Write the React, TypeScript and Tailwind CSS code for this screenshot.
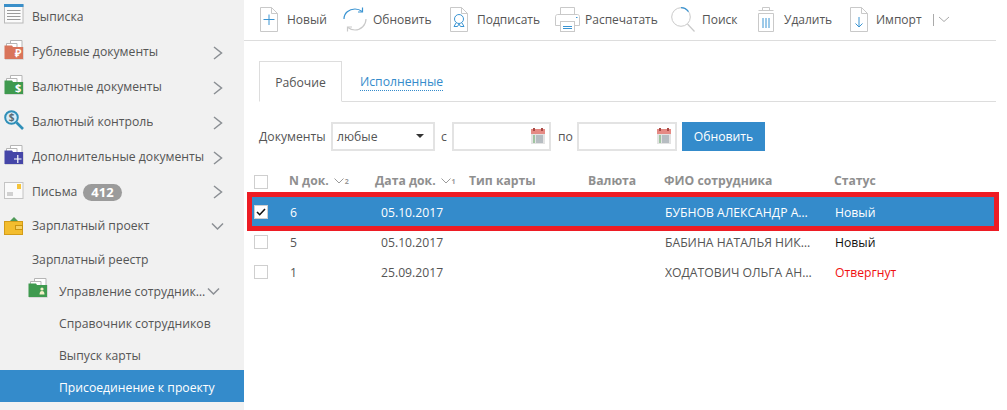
import React from "react";

const Chevron = ({ down }: { down?: boolean }) => (
  <svg width="20" height="14" viewBox="0 0 20 14" fill="none" stroke="#8b8f94" strokeWidth="1.5">
    {down ? <path d="M5 3.5l5.5 5.5 5.5-5.5" /> : <path d="M7 1l7.5 6-7.5 6" />}
  </svg>
);

const Folder = ({ color, children }: { color: string; children?: React.ReactNode }) => (
  <svg width="20" height="20" viewBox="0 0 20 20">
    <path d="M6.5 .5h11.5v7h-11.5z" fill="#fff" stroke="#b5b5b5" />
    <path d="M2.5 3.5h10.5v5h-10.5z" fill="#fff" stroke="#b5b5b5" />
    <path d="M.5 5.5h7.5l1 1.5h10V19H.5z" fill={color} />
    <path d="M1 19.5h18.5V7" stroke="#d8d8d8" fill="none" />
    {children}
  </svg>
);

const Vypiska = () => (
  <svg width="20" height="20" viewBox="0 0 20 20" fill="none">
    <rect x=".5" y="1" width="18.5" height="18" fill="#fbfbfb" stroke="#b9b9b9" />
    <rect x="0" y="0" width="19.5" height="3" fill="#3a8fc9" />
    <path d="M3 6.5h13.5M3 9.5h13.5M3 12.5h13.5M3 15.5h13.5" stroke="#9a9a9a" />
  </svg>
);

const MoneySearch = () => (
  <svg width="20" height="20" viewBox="0 0 20 20" fill="none">
    <circle cx="7.5" cy="7.5" r="6.3" fill="#d9ecf6" stroke="#2f8fb8" strokeWidth="2" />
    <path d="M12.5 12.5l6.5 6.5" stroke="#2f8fb8" strokeWidth="2.6" />
    <text x="7.5" y="11" textAnchor="middle" fontSize="10" fontWeight="700" fill="#5a6a72" fontFamily="Open Sans">$</text>
  </svg>
);

const Letter = () => (
  <svg width="20" height="18" viewBox="0 0 20 18" fill="none">
    <rect x=".5" y=".5" width="18.5" height="16" fill="#fafafa" stroke="#c4c4c4" />
    <rect x="13" y="2" width="4" height="5" fill="#f5c43a" />
    <path d="M3 11h6M3 13h6" stroke="#a8a8a8" />
  </svg>
);

const Wallet = () => (
  <svg width="20" height="20" viewBox="0 0 20 20" fill="none">
    <path d="M5 6l5-5 5 5z" fill="#4f9a58" />
    <rect x=".5" y="5.5" width="18" height="13" fill="#f3bd2e" stroke="#d39c18" />
    <rect x="11.5" y="9.5" width="7" height="4" fill="#f7d061" stroke="#c9930f" />
  </svg>
);

const iconStroke = "#c9c9c9";
const iconBlue = "#3a94d2";

const DocIcon = ({ children }: { children?: React.ReactNode }) => (
  <svg width="18" height="25" viewBox="0 0 18 25" fill="none">
    <path d="M.5.5h11l6 6v18H.5z" fill="#fff" stroke={iconStroke} />
    <path d="M11.5.5v6h6" stroke={iconStroke} />
    {children}
  </svg>
);

const Refresh = () => (
  <svg width="24" height="25" viewBox="0 0 24 25" fill="none">
    <path d="M1 12C1 6 6 2 12 2c3 0 5 .8 7 2.5" stroke={iconBlue} strokeWidth="1.2" />
    <path d="M19.5 .5v4.5h-4.5" stroke={iconBlue} strokeWidth="1.2" />
    <path d="M23 12c0 6-5 11-11 11-3 0-5-.8-7-2.5" stroke={iconStroke} strokeWidth="1.2" />
    <path d="M4.5 24.5v-4.5h4.5" stroke={iconStroke} strokeWidth="1.2" />
  </svg>
);

const Printer = () => (
  <svg width="25" height="25" viewBox="0 0 25 25" fill="none" stroke={iconStroke}>
    <path d="M5.5 7.5v-7h14v7" fill="#fff" />
    <path d="M5.5 18.5h-5v-9c0-1 1-2 2-2h20c1 0 2 1 2 2v9h-5" fill="#fff" />
    <rect x="5.5" y="14.5" width="14" height="10" fill="#fff" />
    <path d="M8 19.5h9M8 21.5h9" stroke={iconBlue} />
    <path d="M21 10.5h1.5" stroke={iconBlue} />
  </svg>
);

const SearchIcon = () => (
  <svg width="24" height="25" viewBox="0 0 24 25" fill="none">
    <circle cx="10" cy="10" r="9.3" stroke={iconStroke} fill="#fff" />
    <path d="M10 .7a9.3 9.3 0 0 1 7.5 4" stroke={iconBlue} strokeWidth="1.2" />
    <path d="M16.5 17l7 7.5" stroke={iconStroke} strokeWidth="1.2" />
  </svg>
);

const Trash = () => (
  <svg width="16" height="25" viewBox="0 0 16 25" fill="none" stroke={iconStroke}>
    <path d="M4.5 3V.5h7V3" />
    <path d="M.5 3.5h15" />
    <path d="M.5 6.5h15" />
    <path d="M.5 6.5v18h15v-18" />
    <path d="M5 11v10M8 11v10M11 11v10" stroke={iconBlue} />
  </svg>
);

const Tool = ({ icon, label, className, labelCls }: { icon: React.ReactNode; label: string; className: string; labelCls: string }) => (
  <div className={`flex items-center ${className}`}>
    {icon}
    <span className={`whitespace-nowrap text-[12px] leading-none text-[#555555] ${labelCls}`}>{label}</span>
  </div>
);

const Calendar = () => (
  <svg width="14" height="16" viewBox="0 0 14 16" className="absolute right-[4px] top-[4px]">
    <rect x="0" y="1" width="14" height="15" fill="#e3e3e3" />
    <rect x="0" y="1" width="14" height="5" fill="#e58a84" />
    <rect x="2" y="0" width="2" height="3" fill="#a84a45" />
    <rect x="10" y="0" width="2" height="3" fill="#a84a45" />
    <path d="M2 8h2M2 10h2M2 12h2M2 14h2" stroke="#5da560" strokeWidth="1" />
    <path d="M5 8h7M5 10h7M5 12h7M5 14h7" stroke="#8a96a0" strokeWidth="1" />
  </svg>
);

const SortArrow = ({ n }: { n: string }) => (
  <span className="ml-[5px] flex items-center">
    <svg width="10" height="6" viewBox="0 0 10 6" fill="none" stroke="#9a9a9a">
      <path d="M.5.5L5 5 9.5.5" />
    </svg>
    <span className="ml-px text-[7px] leading-none text-[#999999]">{n}</span>
  </span>
);

const Box = ({ checked }: { checked?: boolean }) => (
  <div className="flex h-[14px] w-[14px] items-center justify-center border border-[#cfcfcf] bg-white">
    {checked && (
      <svg width="10" height="8" viewBox="0 0 10 8" fill="none" stroke="#111" strokeWidth="1.6">
        <path d="M1 4l2.7 2.7L9 1" />
      </svg>
    )}
  </div>
);

const SideRow = ({ icon, label, badge, arrow, h, lift }: { icon: React.ReactNode; label: string; badge?: string; arrow?: "r" | "d"; h: string; lift: string }) => (
  <div className={`flex items-center pl-[4px] ${h}`}>
    <div className={`flex w-[28px] shrink-0 ${lift}`}>{icon}</div>
    <span className="truncate text-[12.2px] text-[#555555]">{label}</span>
    {badge && (
      <span className="ml-[6px] rounded-full bg-[#9b9b9b] px-[8px] text-[13px] font-bold leading-[17px] text-white">{badge}</span>
    )}
    {arrow && (
      <span className="ml-auto mr-[17px]">
        <Chevron down={arrow === "d"} />
      </span>
    )}
  </div>
);

const Row = ({ n, date, fio, status, statusCls, checked, active }: { n: string; date: string; fio: string; status: string; statusCls: string; checked?: boolean; active?: boolean }) => (
  <div className={`flex h-[30px] items-center text-[12.2px] ${active ? "bg-[#348bcb] text-white" : "text-[#555555]"}`}>
    <div className="w-[38px] pl-[2px]"><Box checked={checked} /></div>
    <div className="w-[91px] pt-[2px]">{n}</div>
    <div className="w-[284px] pt-[2px]">{date}</div>
    <div className="mr-[20px] w-[150px] truncate pt-[2px]">{fio}</div>
    <div className={`pt-[2px] ${statusCls}`}>{status}</div>
  </div>
);

export default function App() {
  return (
    <div className="relative flex h-[410px] w-[1007px] overflow-hidden bg-white" style={{ fontFamily: '"Open Sans", sans-serif' }}>
      <aside className="w-[244px] shrink-0 bg-[#f1f1f1]">
        <SideRow h="h-[35px] pb-[1px]" lift="-translate-y-[3px]" icon={<Vypiska />} label="Выписка" />
        <SideRow h="h-[35px]" lift="-translate-y-[3px]" icon={<Folder color="#d9745a"><text x="11" y="17" fontSize="11" fill="#fff" fontFamily="Open Sans" fontWeight="700">₽</text></Folder>} label="Рублевые документы" arrow="r" />
        <SideRow h="h-[35px]" lift="-translate-y-[3px]" icon={<Folder color="#3f9a4f"><text x="11" y="17" fontSize="11" fill="#fff" fontFamily="Open Sans" fontWeight="700">$</text></Folder>} label="Валютные документы" arrow="r" />
        <SideRow h="h-[35px]" lift="-translate-y-[3px]" icon={<MoneySearch />} label="Валютный контроль" arrow="r" />
        <SideRow h="h-[35px]" lift="-translate-y-[3px]" icon={<Folder color="#4546a8"><path d="M10 14h7.5M13.8 10v8" stroke="#fff" strokeWidth="1.2" /></Folder>} label="Дополнительные документы" arrow="r" />
        <SideRow h="h-[34px]" lift="-translate-y-[1px]" icon={<Letter />} label="Письма" badge="412" arrow="r" />
        <SideRow h="h-[35px]" lift="-translate-y-[1px]" icon={<Wallet />} label="Зарплатный проект" arrow="d" />
        <div className="flex h-[32px] items-center pl-[32px] text-[12.2px] text-[#555555]">Зарплатный реестр</div>
        <div className="flex h-[32px] items-center pl-[28px]">
          <div className="flex w-[31px] shrink-0 -translate-y-[4px]">
            <Folder color="#3f9a4f">
              <circle cx="14" cy="11" r="1.6" fill="#f5efc8" />
              <path d="M11.5 16.5c0-2.5 1-3.5 2.5-3.5s2.5 1 2.5 3.5z" fill="#f5efc8" />
            </Folder>
          </div>
          <span className="w-[148px] truncate text-[12.2px] text-[#555555]">Управление сотрудниками</span>
          <span className="-ml-[4px]"><Chevron down /></span>
        </div>
        <div className="flex h-[32px] items-center pl-[59px] text-[12.2px] text-[#555555]">Справочник сотрудников</div>
        <div className="flex h-[30px] items-center pl-[59px] pt-[3px] text-[12.2px] text-[#555555]">Выпуск карты</div>
        <div className="flex h-[32px] items-center bg-[#348bcb] pl-[59px] pt-[4px] text-[12.2px] text-white">Присоединение к проекту</div>
      </aside>
      <main className="w-[752px] shrink-0">
        <div className="flex h-[41px] items-center border-b border-[#dddddd] pl-[16px] pb-[1px]">
          <Tool className="gap-[9px] mr-[16px]" labelCls="w-[40px]" icon={<DocIcon><path d="M3.5 12.5h11M9 7.5v10.5" stroke={iconBlue} /></DocIcon>} label="Новый" />
          <Tool className="gap-[6px] mr-[19px]" labelCls="w-[58px]" icon={<Refresh />} label="Обновить" />
          <Tool className="gap-[9px] mr-[15px]" labelCls="w-[63px]" icon={<DocIcon><circle cx="9" cy="12" r="4.5" stroke={iconBlue} /><path d="M6 16l-2 3.5h3.5L9 17l1.5 2.5H14l-2-3.5" stroke={iconBlue} /></DocIcon>} label="Подписать" />
          <Tool className="gap-[5px] mr-[15px]" labelCls="w-[71px]" icon={<Printer />} label="Распечатать" />
          <Tool className="gap-[7px] mr-[19px]" labelCls="w-[37px]" icon={<SearchIcon />} label="Поиск" />
          <Tool className="gap-[10px] mr-[19px]" labelCls="w-[47px]" icon={<Trash />} label="Удалить" />
          <Tool className="gap-[8px]" labelCls="w-[47px]" icon={<DocIcon><path d="M9 10v10M5.5 16.5L9 20l3.5-3.5" stroke={iconBlue} /></DocIcon>} label="Импорт" />
          <div className="ml-[10px] h-[12px] w-px bg-[#aaaaaa]" />
          <svg width="12" height="7" viewBox="0 0 12 7" fill="none" stroke="#aaaaaa" className="ml-[4px]"><path d="M1 1l5 4.5L11 1" /></svg>
        </div>
        <div className="ml-[15px] mt-[20px] flex h-[41px] w-[737px] border-b border-[#dddddd]">
          <div className="flex h-[41px] w-[83px] items-center justify-center border border-b-white border-[#dddddd] bg-white pt-[3px] text-[12.2px] text-[#555555]">Рабочие</div>
          <div className="ml-[18px] flex items-center pt-[1px]">
            <span className="border-b border-dotted border-[#348bcb] text-[12.2px] leading-[17px] text-[#348bcb]">Исполненные</span>
          </div>
        </div>
        <div className="ml-[15px] mt-[20px] flex h-[29px] items-center text-[12.2px] text-[#555555]">
          <span className="w-[72px] pt-[2px]">Документы</span>
          <div className="relative flex h-[29px] w-[104px] items-center border-2 border-[#e3e3e3] pl-[4px] pt-[2px]">
            любые
            <div className="absolute right-[9px] top-[10px] h-0 w-0 border-x-[4px] border-t-[4px] border-x-transparent border-t-[#333333]" />
          </div>
          <span className="w-[17px] pl-[6px] pt-[2px]">с</span>
          <div className="relative h-[29px] w-[99px] border-2 border-[#e3e3e3]"><Calendar /></div>
          <span className="w-[26px] pl-[7px] pt-[2px]">по</span>
          <div className="relative h-[29px] w-[100px] border-2 border-[#e3e3e3]"><Calendar /></div>
          <div className="ml-[5px] flex h-[29px] w-[83px] items-center justify-center bg-[#348bcb] pt-[2px] text-white">Обновить</div>
        </div>
        <div className="ml-[8px] mt-[15px] w-[742px]">
          <div className="flex h-[31px] items-center text-[12.2px] font-bold text-[#8f8f8f]">
            <div className="w-[37px] pl-[2px]"><Box /></div>
            <div className="flex w-[86px] items-center">N док.<SortArrow n="2" /></div>
            <div className="flex w-[94px] items-center">Дата док.<SortArrow n="1" /></div>
            <div className="w-[119px]">Тип карты</div>
            <div className="w-[76px]">Валюта</div>
            <div className="w-[170px]">ФИО сотрудника</div>
            <div>Статус</div>
          </div>
          <Row active checked n="6" date="05.10.2017" fio="БУБНОВ АЛЕКСАНДР АНДРЕЕВИЧ" status="Новый" statusCls="" />
          <Row n="5" date="05.10.2017" fio="БАБИНА НАТАЛЬЯ НИКОЛАЕВНА" status="Новый" statusCls="text-[#111111]" />
          <Row n="1" date="25.09.2017" fio="ХОДАТОВИЧ ОЛЬГА АНДРЕЕВНА" status="Отвергнут" statusCls="text-[#f01010]" />
        </div>
      </main>
      <div className="pointer-events-none absolute left-[247px] top-[192px] h-[39px] w-[752px] border-[5px] border-[#ed1c24]" />
    </div>
  );
}
